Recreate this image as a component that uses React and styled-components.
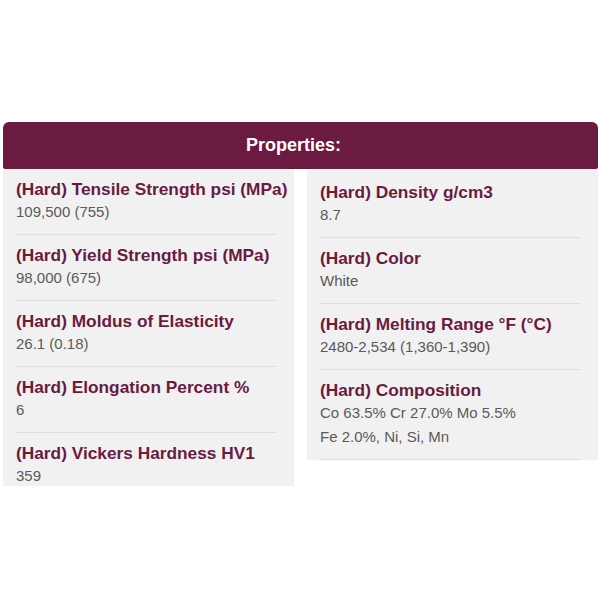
import React from "react";
import styled, { createGlobalStyle } from "styled-components";

const left = [
    { title: "(Hard) Tensile Strength psi (MPa)", value: ["109,500 (755)"] },
    { title: "(Hard) Yield Strength psi (MPa)", value: ["98,000 (675)"] },
    { title: "(Hard) Moldus of Elasticity", value: ["26.1 (0.18)"] },
    { title: "(Hard) Elongation Percent %", value: ["6"] },
    { title: "(Hard) Vickers Hardness HV1", value: ["359"] },
];

const right = [
    { title: "(Hard) Density g/cm3", value: ["8.7"] },
    { title: "(Hard) Color", value: ["White"] },
    { title: "(Hard) Melting Range °F (°C)", value: ["2480-2,534 (1,360-1,390)"] },
    { title: "(Hard) Composition", value: ["Co 63.5% Cr 27.0% Mo 5.5%", "Fe 2.0%, Ni, Si, Mn"] },
];

const App = () => {
    return (
        <>
            <GlobalStyle />
            <Page>
                <Panel>
                    <Header>Properties:</Header>
                    <Columns>
                        <Column $clip $offset={5}>
                            {left.map(item => (
                                <Item key={item.title}>
                                    <Title>{item.title}</Title>
                                    {item.value.map(v => <Value key={v}>{v}</Value>)}
                                </Item>
                            ))}
                        </Column>
                        <Column $offset={12}>
                            {right.map(item => (
                                <Item key={item.title}>
                                    <Title>{item.title}</Title>
                                    {item.value.map(v => <Value key={v}>{v}</Value>)}
                                </Item>
                            ))}
                        </Column>
                    </Columns>
                </Panel>
            </Page>
        </>
    )
}

const GlobalStyle = createGlobalStyle`
    body{
        margin: 0;
        background: #fff;
        font-family: "Liberation Sans", Arial, sans-serif;
    }
`
const Page = styled.div`
    width: 600px;
    height: 600px;
    padding-top: 122px;
    box-sizing: border-box;
`
const Panel = styled.div`
    margin-left: 3px;
    width: 595px;
`
const Header = styled.div`
    height: 47px;
    background: #6b1a40;
    border-radius: 6px 6px 2px 2px;
    color: #fff;
    font-weight: 700;
    font-size: 18px;
    display: flex;
    align-items: center;
    justify-content: center;
    padding-right: 14px;
`
const Columns = styled.div`
    display: flex;
    align-items: flex-start;
    gap: 13px;
`
const Column = styled.div`
    width: 291px;
    background: #f1f1f1;
    padding-top: ${p => p.$offset - 9}px;
    height: ${p => (p.$clip ? "317px" : "auto")};
    overflow: hidden;
    box-sizing: border-box;
`
const Item = styled.div`
    margin: 0 18px 0 13px;
    padding: 9px 0 10px;
    border-bottom: 1px solid #dedede;
`
const Title = styled.div`
    font-size: 17.3px;
    line-height: 22px;
    font-weight: 700;
    color: #6b1a40;
    white-space: nowrap;
`
const Value = styled.div`
    font-size: 15px;
    line-height: 24px;
    color: #5a5a5a;
`
export default App;
